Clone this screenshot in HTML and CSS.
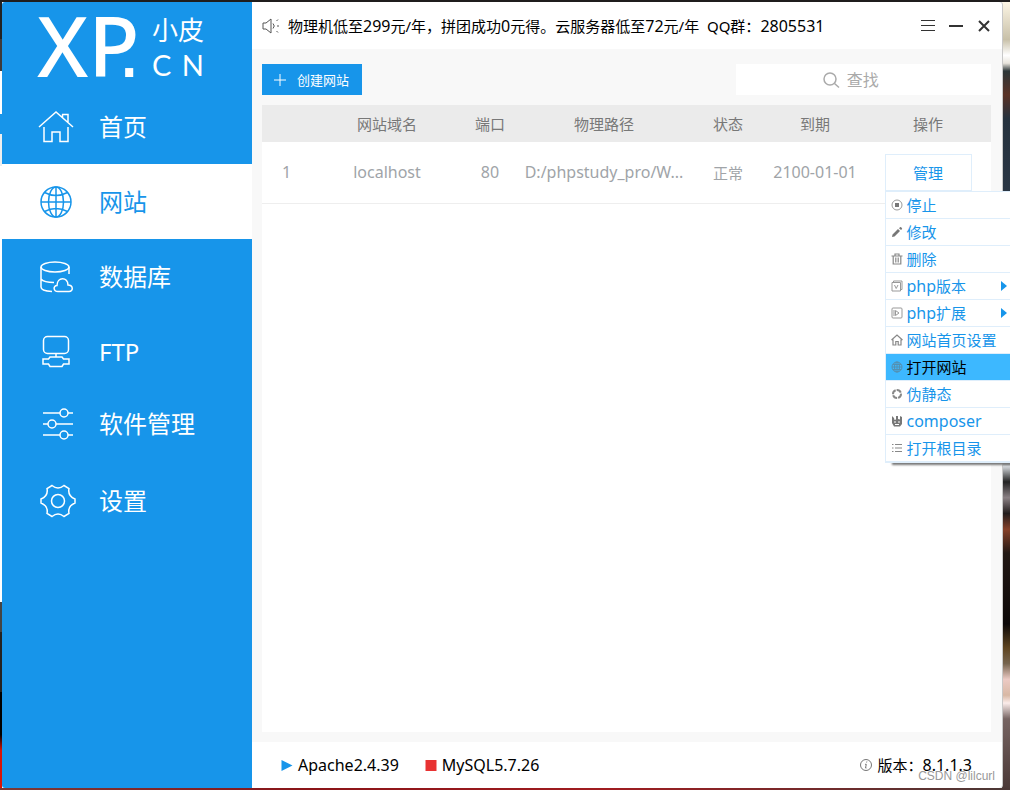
FILE: index.html
```html
<!DOCTYPE html>
<html lang="zh-CN">
<head>
<meta charset="utf-8">
<title>小皮 XP.CN</title>
<link rel="stylesheet" href="styles.css">
</head>
<body>
<div class="desktop">
<div class="app">
  <aside class="sidebar">
    <div class="logo">
      <span class="logo-main">XP<span class="logo-dot">.</span></span>
      <span class="logo-side">
        <span class="logo-zh">小皮</span>
        <span class="logo-cn"><span>C</span><span>N</span></span>
      </span>
    </div>
    <nav class="nav">
      <a href="#home" class="nav-item">
        <svg class="nav-icon" viewBox="0 0 36 36"><path d="M1 18 18 3 35 18M6 18V32.500H14V23H22V32.500H30V18M24 5.500H30V13M24.500 8.500V5.500"/></svg>
        <span>首页</span>
      </a>
      <a href="#site" class="nav-item active">
        <svg class="nav-icon" viewBox="0 0 36 36"><circle cx="18" cy="18" r="15"/><ellipse cx="18" cy="18" rx="7.500" ry="15"/><path d="M18 3V33M3 18H33M6.500 8.500Q18 14.500 29.500 8.500M6.500 27.500Q18 21.500 29.500 27.500"/></svg>
        <span>网站</span>
      </a>
      <a href="#db" class="nav-item">
        <svg class="nav-icon" viewBox="0 0 36 36"><ellipse cx="17" cy="8" rx="14" ry="5"/><path d="M3 8V28Q3 32 14 32.500M31 8V15M3 20Q6 23.500 16 23.500M20 32.500C15 32.500 15 26.500 19 26.500 19 17.500 30 17.500 30 26 35.500 26 35.500 32.500 31 32.500Z"/></svg>
        <span>数据库</span>
      </a>
      <a href="#ftp" class="nav-item">
        <svg class="nav-icon" viewBox="0 0 36 36"><rect x="5.500" y="2.500" width="25" height="17" rx="4"/><path d="M18 19.500V23M12 23H24L25.500 25H31V30H25.500L24 32.500H12L10.500 30H5V25H10.500Z"/></svg>
        <span>FTP</span>
      </a>
      <a href="#soft" class="nav-item compact">
        <svg class="nav-icon" viewBox="0 0 36 36"><path d="M5 7H22M30 7H35M5 18H10M18 18H35M5 29H22M30 29H35"/><circle cx="26" cy="7" r="4"/><circle cx="14" cy="18" r="4"/><circle cx="26" cy="29" r="4"/></svg>
        <span>软件管理</span>
      </a>
      <a href="#settings" class="nav-item tall">
        <svg class="nav-icon" viewBox="0 0 36 36"><path d="M14 2.500 Q20 7.500 26 2.500 L31 5.500 Q29.500 13 37 16 V20 Q29.500 23 31 30.500 L26 33.500 Q20 28.500 14 33.500 L9 30.500 Q10.500 23 3 20 V16 Q10.500 13 9 5.500 Z"/><circle cx="20" cy="18" r="6.500"/></svg>
        <span>设置</span>
      </a>
    </nav>
  </aside>

  <main class="main">
    <header class="titlebar">
      <svg class="speaker" viewBox="0 0 18 18"><path d="M1 6H4L9 2V16L4 12H1ZM11 6.500Q13.500 9 11 11.500"/><path d="M14.500 4 16 2.500M15 9H17M14.500 14 16 15.500"/></svg>
      <p class="notice">物理机低至<span class="latin">299</span>元/年，拼团成功<span class="latin">0</span>元得。云服务器低至<span class="latin">72</span>元/年&nbsp; QQ群：<span class="latin">2805531</span></p>
      <div class="window-buttons">
        <button type="button" aria-label="菜单"><svg viewBox="0 0 16 16"><path d="M1 2.500H15M1 7.500H15M1 12.500H15"/></svg></button>
        <button type="button" aria-label="最小化"><svg viewBox="0 0 16 16"><path d="M1 8H15" stroke-width="2"/></svg></button>
        <button type="button" aria-label="关闭"><svg viewBox="0 0 16 16"><path d="M3 3 13 13M13 3 3 13" stroke-width="2"/></svg></button>
      </div>
    </header>

    <section class="content">
      <div class="toolbar">
        <button type="button" class="create"><svg viewBox="0 0 14 14"><path d="M7 1V13M1 7H13"/></svg><span>创建网站</span></button>
        <label class="search">
          <svg viewBox="0 0 18 18"><circle cx="8" cy="8" r="6"/><path d="M12.500 12.500 17 16.500"/></svg>
          <input type="text" placeholder="查找" aria-label="查找">
        </label>
      </div>
      <div class="panel">
        <table class="sites">
          <thead>
            <tr><th class="c-num"></th><th>网站域名</th><th class="c-port">端口</th><th class="c-path">物理路径</th><th class="c-state">状态</th><th class="c-date">到期</th><th class="c-act">操作</th></tr>
          </thead>
          <tbody>
            <tr>
              <td class="latin">1</td><td class="latin">localhost</td><td class="latin">80</td><td class="latin">D:/phpstudy_pro/W...</td><td>正常</td><td class="latin">2100-01-01</td>
              <td>
                <div class="manage">
                  <button type="button" class="manage-button">管理</button>
                  <div class="menu">
                    <button type="button"><svg viewBox="0 0 12 12"><circle class="line thin" cx="6" cy="6" r="5"/><path d="M4 4H8V8H4Z"/></svg>停止</button>
                    <button type="button"><svg viewBox="0 0 12 12"><path d="M1 11 1.500 8.500 7 3 9 5 3.500 10.500ZM8 2.200 9 1.200Q10 .8 10.800 2T10.800 3.200L10 4Z"/></svg>修改</button>
                    <button type="button"><svg viewBox="0 0 12 12"><path class="line" d="M.5 3H11.500M4 3V1H8V3M2.200 3V11H9.800V3M4.800 4.500V9.500M7.200 4.500V9.500"/></svg>删除</button>
                    <button type="button"><svg viewBox="0 0 12 12"><path class="line thin" d="M1 2.500H9.500V11H1ZM2.500 2.500V1H11V9.500H9.500M3.500 5 5.200 8.500 7 5"/></svg><span><span class="latin">php</span>版本</span><i class="arrow"></i></button>
                    <button type="button"><svg viewBox="0 0 12 12"><rect class="line thin" x="1" y="1" width="10" height="10" rx="1"/><path class="line thin" d="M4.500 3.500V8.500L8 6ZM3 3V9"/></svg><span><span class="latin">php</span>扩展</span><i class="arrow"></i></button>
                    <button type="button"><svg viewBox="0 0 12 12"><path class="line" d="M.5 6 6 1 11.500 6M2 5.500V11H4.800V7.500H7.200V11H10V5.500"/></svg>网站首页设置</button>
                    <button type="button" class="selected"><svg viewBox="0 0 12 12"><circle class="line thin" cx="6" cy="6" r="5"/><ellipse class="line thin" cx="6" cy="6" rx="2.500" ry="5"/><path class="line thin" d="M1 6H11M6 1V11M2 3.500H10M2 8.500H10"/></svg>打开网站</button>
                    <button type="button"><svg viewBox="0 0 12 12"><circle class="line dash" cx="6" cy="6" r="4"/></svg>伪静态</button>
                    <button type="button"><svg viewBox="0 0 12 12"><path d="M1 1 3 3 3.500 5 5 4.500 5 1 7 1V4L9 4.500 9 1 11 2V9L9 11.500H3L1 8Z"/><path class="hole" d="M3 7H5M7 7H9M4 9.500H8"/></svg><span class="latin">composer</span></button>
                    <button type="button"><svg viewBox="0 0 12 12"><path class="line" d="M1 2.500H2.500M4 2.500H11M1 6H2.500M4 6H11M1 9.500H2.500M4 9.500H11"/></svg>打开根目录</button>
                  </div>
                </div>
              </td>
            </tr>
          </tbody>
        </table>
      </div>
    </section>

    <footer class="status">
      <span class="service"><svg viewBox="0 0 12 12"><path class="running" d="M0 0 12 6 0 12Z"/></svg>Apache2.4.39</span>
      <span class="service"><svg viewBox="0 0 12 12"><path class="stopped" d="M0 0H12V12H0Z"/></svg>MySQL5.7.26</span>
      <span class="version"><svg viewBox="0 0 14 14"><circle cx="7" cy="7" r="5.500"/><path d="M7.800 3.500 7.600 4.500M6 6.300H7.300L6.500 10H7.500"/></svg><span>版本：<span class="latin">8.1.1.3</span></span></span>
      <span class="watermark">CSDN @lilcurl</span>
    </footer>
  </main>
</div>
</div>
</body>
</html>
```

FILE: styles.css
```css
* { box-sizing: border-box; }

body {
  margin: 0;
  font-family: "Noto Sans", "Noto Sans CJK SC", sans-serif;
  font-size: 15px;
  color: #000;
}

button, input { font: inherit; color: inherit; }
button { cursor: pointer; }

svg { flex: none; fill: none; stroke: currentColor; }

.latin { font-size: 16px; }

.desktop {
  display: flex;
  min-height: 100vh;
  padding: 2px 8px 2px 2px;
  overflow: hidden;
  background:
    linear-gradient(#1f1d1d, #1f1d1d) top / 100% 2px no-repeat,
    linear-gradient(90deg, #7a3a38, #8a1418 30%, #a01c20 60%, #4a3836) bottom / 100% 2px no-repeat,
    linear-gradient(#222 5%, #3e3a39 5% 9%, #fff 9% 14.4%, #1795ea 14.4% 17%, #eee 17% 21%, #fff 21% 76.200%, #444 76.200% 80%, #252220 80% 87.600%, #000 87.600% 93%, #d81408 95%) left / 2px 100% no-repeat,
    linear-gradient(#fff8e8, #c8c0a8 5%, #fff 7%, #e8e4dc 8%, #2c3638 9%, #5a3226 12%, #26323e 15%, #2a3644 24%, #222 58%, #d8dce0 59%, #222 61%, #8a8084 63%, #221c1c 65%, #864028 67%, #221814 70%, #0c0808 79%, #5e4420 82%, #76644e 84%, #eccac4 86%, #d8b8a4 88%, #fbecea 89%, #766462 91%, #4a3836) right / 8px 100% no-repeat;
}

.app {
  display: grid;
  grid-template-columns: 250px minmax(0, 1fr);
  flex: 1;
  border-radius: 3px;
  box-shadow: 1px 0 0 #c8c8c8;
  background: #fff;
}

.sidebar {
  background: #1795ea;
  color: #fff;
  border-radius: 3px 0 0 3px;
}

.logo {
  display: flex;
  height: 87px;
  padding: 0 48px 0 35px;
  justify-content: space-between;
}

.logo-main {
  font-size: 84px;
  font-weight: 500;
  line-height: 86px;
  white-space: nowrap;
}

.logo-dot { font-family: "Liberation Sans", sans-serif; margin-left: -22px; }

.logo-side {
  display: flex;
  flex-direction: column;
  width: 52px;
  padding-top: 10px;
}

.logo-zh { font-size: 26px; line-height: 36px; }

.logo-cn {
  display: flex;
  justify-content: space-between;
  font: 29px/34px Lato, sans-serif;
}

.nav-item {
  display: flex;
  align-items: center;
  gap: 25px;
  height: 75px;
  padding-left: 36px;
  color: #fff;
  font-size: 24px;
  line-height: 32px;
  text-decoration: none;
}

.nav-item.active { background: #fff; color: #1795ea; }
.nav-item.compact { height: 69px; }
.nav-item.tall { height: 85px; }

.nav-icon { width: 36px; height: 36px; stroke-width: 1.5; overflow: visible; }

.main { display: flex; flex-direction: column; }

.titlebar {
  display: flex;
  align-items: center;
  height: 47px;
  padding: 0 8px 0 10px;
  gap: 8px;
}

.speaker { width: 18px; height: 18px; color: #555; }

.notice { flex: 1; margin: 0; white-space: nowrap; }

.window-buttons { display: flex; gap: 8px; }

.window-buttons button {
  display: flex;
  padding: 2px;
  border: 0;
  background: none;
  color: #333;
}

.window-buttons svg { width: 16px; height: 16px; }

.content {
  display: flex;
  flex: 1;
  flex-direction: column;
  gap: 10px;
  padding: 15px 11px 10px 10px;
  background: #f8f8f8;
}

.toolbar { display: flex; justify-content: space-between; height: 31px; }

.create {
  display: flex;
  align-items: center;
  gap: 10px;
  padding: 0 13px 0 11px;
  border: 0;
  background: #1795ea;
  color: #fff;
  font-size: 13px;
}

.create svg { width: 14px; height: 14px; }

.search {
  display: flex;
  align-items: center;
  gap: 7px;
  width: 35%;
  padding-left: 86px;
  background: #fff;
  color: #aaa;
}

.search svg { width: 18px; height: 18px; stroke-width: 1.5; }

.search input {
  flex: 1;
  min-width: 0;
  padding: 0;
  border: 0;
  outline: 0;
  background: none;
  font-size: 16px;
}

.search input::placeholder { color: #aaa; }

.panel { flex: 1; background: #fff; }

.sites {
  width: 100%;
  table-layout: fixed;
  border-collapse: collapse;
  text-align: center;
  white-space: nowrap;
}

.sites th {
  height: 37px;
  padding: 0;
  background: #ebebeb;
  color: #787878;
  font-weight: 400;
}

.sites td {
  height: 61px;
  padding: 0;
  border-bottom: 1px solid #eee;
  color: #a0a4a8;
}

.c-num { width: 49px; }
.c-port { width: 54px; }
.c-path { width: 174px; }
.c-state { width: 74px; }
.c-date { width: 100px; }
.c-act { width: 126px; }

.manage { position: relative; width: 87px; margin: 0 auto; }

.manage-button {
  display: block;
  width: 100%;
  height: 37px;
  padding: 0;
  border: 1px solid #dfeefb;
  background: #fff;
  color: #1795ea;
}

.menu {
  position: absolute;
  top: 100%;
  left: 0;
  z-index: 1;
  width: 136px;
  border: 1px solid #dfeefb;
  background: #fff;
  box-shadow: 6px 3px 2px -1px #777;
}

.menu button {
  display: flex;
  align-items: center;
  gap: 4px;
  width: 100%;
  height: 27px;
  padding: 0 13px 0 5px;
  border: 0;
  border-bottom: 1px solid #dfeefb;
  background: none;
  color: #1795ea;
  line-height: 20px;
  text-align: left;
}

.menu button.selected { background: #3db8ff; color: #000; }

.menu svg { width: 12px; height: 12px; fill: #777; stroke: none; }
.menu .line { fill: none; stroke: #888; stroke-width: 1.2; }
.menu .thin { stroke-width: 1; stroke: #999; }
.menu .dash { stroke-width: 2; stroke-dasharray: 5 1; }
.menu .hole { stroke: #fff; }
.menu .selected .line { stroke: #5590b0; }

.arrow {
  margin-left: auto;
  border: 5px solid transparent;
  border-left: 6px solid #1795ea;
  border-right: 0;
}

.status {
  position: relative;
  display: flex;
  align-items: center;
  height: 46px;
  padding: 0 30px 0 29px;
  gap: 26px;
  font-size: 16px;
}

.service, .version { display: flex; align-items: center; gap: 5px; }
.service svg { width: 12px; height: 11px; stroke: none; }
.running { fill: #1795ea; }
.stopped { fill: #e83232; }
.version { margin-left: auto; font-size: 15px; }
.version svg { width: 14px; height: 14px; color: #777; }

.watermark {
  position: absolute;
  right: 7px;
  bottom: 4px;
  color: #999;
  font: 12px/16px "Liberation Sans", sans-serif;
}
```
